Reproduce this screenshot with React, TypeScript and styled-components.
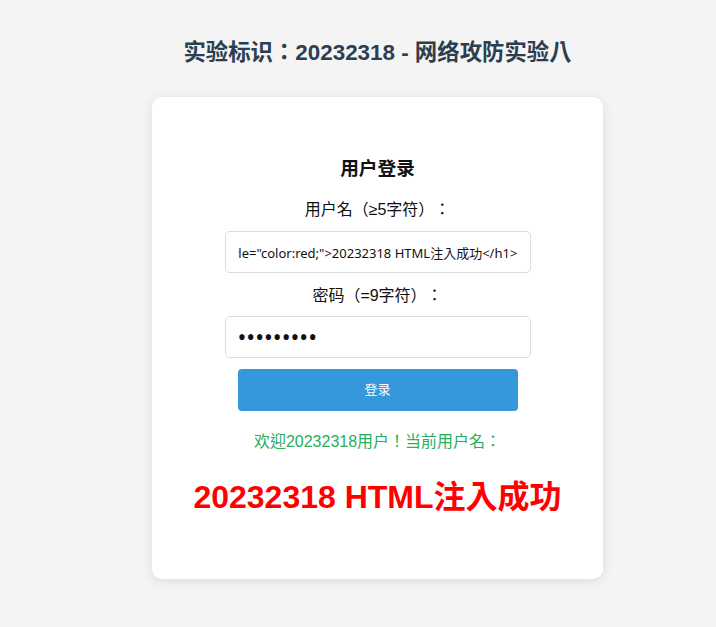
import { useLayoutEffect, useRef } from 'react';
import styled, { createGlobalStyle } from 'styled-components';

const GlobalStyle = createGlobalStyle`
	html, body {
		margin: 0;
		padding: 0;
		background: #f4f4f4;
	}
	body {
		font-family: "Liberation Sans", Arial, "Noto Sans CJK TC", sans-serif;
		text-spacing-trim: space-all;
	}
`;

const Page = styled.div`
	min-height: 627px;
	box-sizing: border-box;
	padding: 39px 0 0 39px;
	display: flex;
	flex-direction: column;
	align-items: center;
`;

const Title = styled.h2`
	margin: 0;
	font-size: 22.4px;
	line-height: 28px;
	font-weight: 700;
	color: #2c3e50;
`;

const Card = styled.div`
	margin-top: 30px;
	width: 451px;
	height: 482px;
	box-sizing: border-box;
	background: #ffffff;
	border-radius: 10px;
	box-shadow: 0 2px 12px rgba(0, 0, 0, 0.1);
	padding-top: 59px;
	display: flex;
	flex-direction: column;
	align-items: center;
`;

const FormTitle = styled.h3`
	margin: 0;
	font-size: 18.7px;
	line-height: 26px;
	font-weight: 700;
	color: #111;
`;

const Label = styled.label<{ $mt: number }>`
	display: block;
	margin-top: ${(props) => props.$mt}px;
	font-size: 16px;
	line-height: 22px;
	color: #111;
`;

const Input = styled.input<{ $mt: number; $fsize: number }>`
	display: block;
	margin: ${(props) => props.$mt}px 0 0;
	width: 306px;
	height: 42px;
	box-sizing: border-box;
	padding: 0 12px;
	border: 1px solid #dcdcdc;
	border-radius: 5px;
	background: #fff;
	font-family: "Noto Sans", "Noto Sans CJK TC", sans-serif;
	font-size: ${(props) => props.$fsize}px;
	color: #111;
	outline: none;
	text-spacing-trim: space-all;
`;

const SubmitBtn = styled.button`
	margin-top: 11px;
	width: 280px;
	height: 42px;
	border: none;
	border-radius: 4px;
	background: #3498db;
	color: #fff;
	font-family: "Noto Sans", "Noto Sans CJK TC", sans-serif;
	font-size: 13px;
	line-height: 1;
	padding: 0 0 2px;
	cursor: pointer;
`;

const Welcome = styled.p`
	margin: 20px 0 0;
	font-size: 16px;
	line-height: 22px;
	color: #27ae60;
`;

const Injected = styled.h1`
	margin: 24px 0 0;
	font-size: 32px;
	line-height: 40px;
	font-weight: 700;
	color: #ff0000;
`;

const usernameValue = '<h1 style="color:red;">20232318 HTML注入成功</h1>';

export default function App() {
	const userRef = useRef<HTMLInputElement>(null);

	useLayoutEffect(() => {
		if (userRef.current) {
			userRef.current.scrollLeft = userRef.current.scrollWidth;
		}
	}, []);

	return (
		<>
			<GlobalStyle />
			<Page>
				<Title>实验标识：20232318 - 网络攻防实验八</Title>
				<Card>
					<FormTitle>用户登录</FormTitle>
					<Label $mt={17}>用户名（≥5字符）：</Label>
					<Input ref={userRef} $mt={10} $fsize={13} type="text" defaultValue={usernameValue} />
					<Label $mt={12}>密码（=9字符）：</Label>
					<Input $mt={9} $fsize={23.5} type="password" defaultValue="123456789" />
					<SubmitBtn type="button">登录</SubmitBtn>
					<Welcome>欢迎20232318用户！当前用户名：</Welcome>
					<Injected>20232318 HTML注入成功</Injected>
				</Card>
			</Page>
		</>
	);
}
